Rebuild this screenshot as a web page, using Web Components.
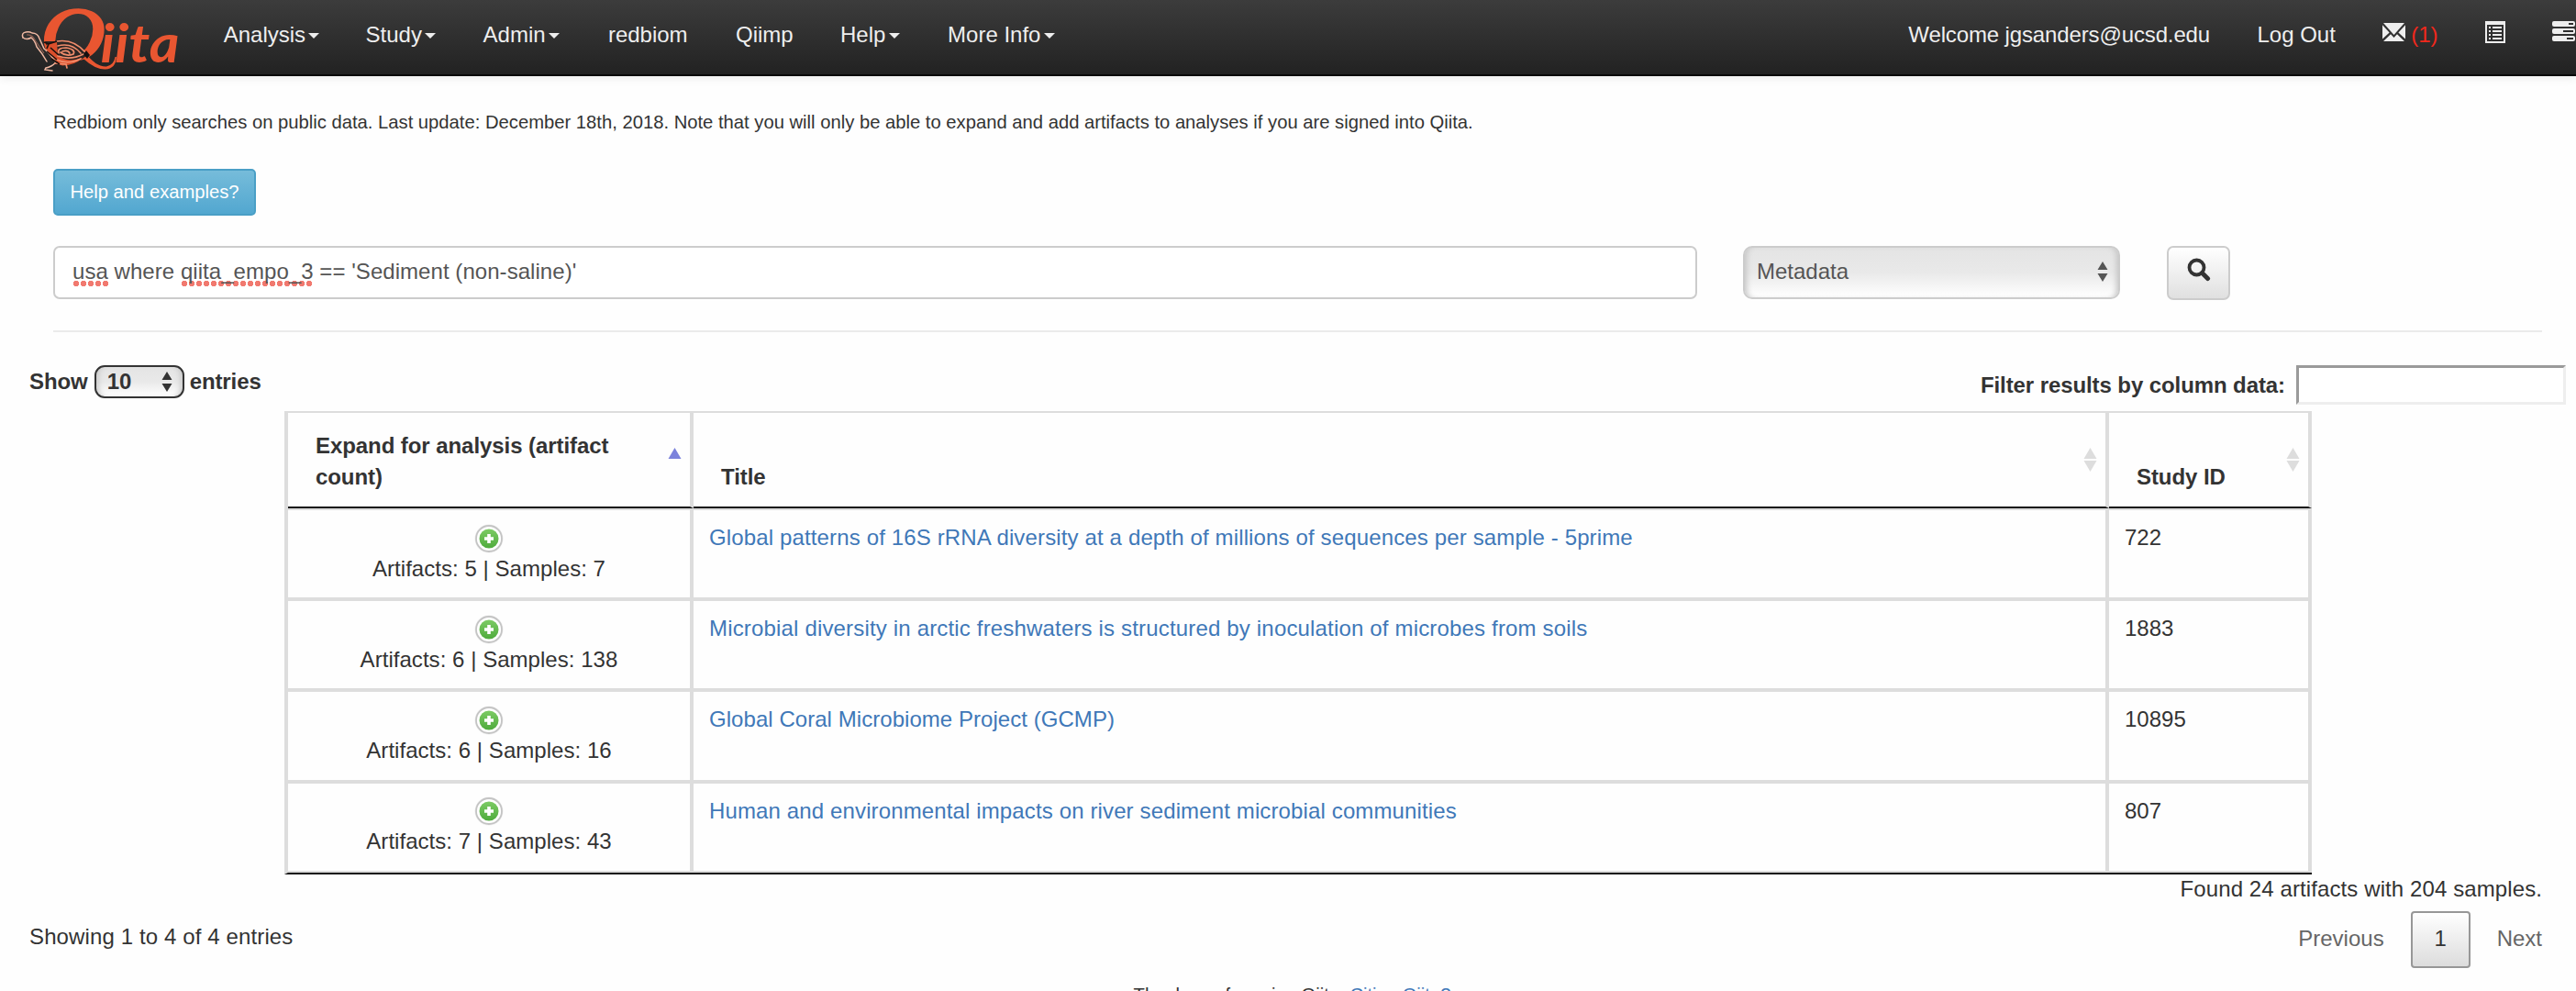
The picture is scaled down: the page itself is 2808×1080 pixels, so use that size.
<!DOCTYPE html>
<html lang="en">
<head>
<meta charset="utf-8">
<title>Qiita</title>
<style>
html,body{margin:0;height:1080px;overflow:hidden;background:#fefefe}
body{font:24px/34px "Liberation Sans",Arial,sans-serif;color:#333}
</style>
</head>
<body>
<qiita-page></qiita-page>
<script>
const define=(name,html)=>customElements.define(name,class extends HTMLElement{
  constructor(){super();const t=document.createElement('template');t.innerHTML=html;
    this.attachShadow({mode:'open'}).append(t.content.cloneNode(true));}
});

define('qiita-logo',`<style>:host{display:block;width:186px;height:81px}svg{display:block}text{fill:#e95631}</style>
<svg width="186" height="81" viewBox="14 0 186 81">
<defs><clipPath id="c"><rect x="14" y="0" width="186" height="66"/></clipPath></defs>
<g clip-path="url(#c)"><text x="44" y="65" font-family="Liberation Serif" font-style="italic" font-size="82" textLength="70" lengthAdjust="spacingAndGlyphs" stroke="#e95631" stroke-width="2.4">Q</text></g>
<path d="M93 57Q104 73 116 72.500Q124 71 125.500 62L127 62Q126 75 115 75.500Q104 76 91 64Z" fill="#e95631"/>
<text x="109.500" y="68" font-family="Lato" font-style="italic" font-weight="bold" font-size="57" textLength="86" lengthAdjust="spacingAndGlyphs">iita</text>
<path d="M49 45L62 45Q80 42 93 57L94 61Q84 70 68 71Q56 68 49 45Z" fill="#2c2624"/>
<path d="M49 50Q55 46 62 46L63 60Q72 69 90 63Q82 71 68 71.500Q56 68 49 50Z" fill="#dc4f2c"/>
<g fill="none" stroke="#f0b9a3" stroke-width="1.500" stroke-linecap="round">
<path d="M25 41Q23 36 28 35Q32 34 35 36Q41 36 43 42L48 53Q54 58 61 68Q56 73 50 74L49 76L57 77"/>
<path d="M25 41Q29 44 34 41Q38 44 40 51Q46 58 51 67"/>
</g>
<path d="M29 38Q35 37 39 45L48 58" fill="none" stroke="#8d5e50" stroke-width="1.200"/>
<g fill="none" stroke="#f08d6c" stroke-width="1.700" stroke-linecap="round"><path d="M62 45Q80 42 93 57M63 50Q78 46 88 58M63 61Q77 66 91 59M64 58Q62 52 72 52Q83 54 80 59Q72 62 66 57M68 56Q74 54 76 58M62 65Q74 71 88 64M60 69L72 70L73 74"/></g>
<g fill="none" stroke="#1b100d" stroke-width="1.600"><path d="M48 46L53 48L62 45M53 48L51 53M55 52L64 60M51 56L62 65M56 64L65 70"/></g>
<path d="M91 59L94 55L98 60L95 64Z" fill="#161010"/>
</svg>`);

define('nav-item',`<style>:host{display:flex;align-items:center;height:81px;padding:0 25.7px;color:#eee;white-space:nowrap;gap:3.3px}
i{display:none;border:6px solid transparent;border-top-color:#eee;border-bottom:0;margin-top:-4px}:host([menu]) i{display:block}
span{margin-top:-6px}</style><span><slot></slot></span><i></i>`);

define('mail-icon',`<style>:host{display:block;width:25px;height:20px;margin-top:-5px}svg{display:block}</style>
<svg width="25" height="20" viewBox="0 0 25 20" fill="#eee"><path d="M1 0H24L12.5 13ZM0 2.2L7.6 10.6L0 17.5ZM25 2.2V17.5L17.4 10.6ZM9 12.2L12.5 16L16 12.2L24 20H1Z"/></svg>`);
define('list-icon',`<style>:host{display:block;width:22px;height:24px;margin-top:-5px}svg{display:block}</style>
<svg width="22" height="24" viewBox="0 0 22 24"><path fill="#eee" fill-rule="evenodd" d="M0 0H22V24H0ZM2 4V22H20V4Z"/><path fill="#eee" d="M4 6h2v2H4zM8 6h10v2H8zM4 10h2v2H4zM8 10h10v2H8zM4 14h2v2H4zM8 14h10v2H8zM4 18h2v2H4zM8 18h10v2H8z"/></svg>`);
define('tasks-icon',`<style>:host{display:block;width:25px;height:22px;margin-top:-7px}svg{display:block}</style>
<svg width="25" height="22" viewBox="0 0 25 22"><g fill="#eee"><rect width="25" height="6" rx="2"/><rect y="8" width="25" height="6" rx="2"/><rect y="16" width="25" height="6" rx="2"/></g><path fill="#2d2d2d" d="M18 2h5v2h-5zM12 10h11v2H12zM16 18h7v2h-7z"/></svg>`);

define('top-bar',`<style>:host{display:flex;box-sizing:border-box;height:83px;border-bottom:2px solid #080808;background:linear-gradient(#3c3c3c,#222);box-shadow:0 2px 10px rgba(0,0,0,.08);padding-left:14px}
nav{display:flex}.r{margin-left:auto;margin-right:-25px}.m{display:flex;align-items:center;gap:6px}.m b{font-weight:400;color:#f0281c}
.l{margin-left:18px}.l nav-item:nth-child(2){margin-left:-1.2px}.l nav-item:nth-child(4){margin-left:1.6px}.l nav-item:nth-child(5),.l nav-item:nth-child(7){margin-left:1px}.w{letter-spacing:-.13px}</style>
<qiita-logo></qiita-logo>
<nav class="l"><nav-item menu>Analysis</nav-item><nav-item menu>Study</nav-item><nav-item menu>Admin</nav-item><nav-item>redbiom</nav-item><nav-item>Qiimp</nav-item><nav-item menu>Help</nav-item><nav-item menu>More Info</nav-item></nav>
<nav class="r"><nav-item class="w">Welcome jgsanders@ucsd.edu</nav-item><nav-item>Log Out</nav-item><nav-item><div class="m"><mail-icon></mail-icon><b>(1)</b></div></nav-item><nav-item><list-icon></list-icon></nav-item><nav-item><tasks-icon></tasks-icon></nav-item></nav>`);

define('select-box',`<style>:host{display:flex;box-sizing:border-box;align-items:center;justify-content:space-between;background:linear-gradient(#e4e4e4,#e9e9e9 50%,#fff);border:2px solid #ccc;border-radius:10px;box-shadow:inset 6px 0 6px -4px #c4c4c4,inset -6px 0 6px -4px #c4c4c4}
svg{display:block}</style><span><slot></slot></span><svg width="12" height="22" viewBox="0 0 12 22" fill="currentColor"><path d="M6 0L11.5 9H.5ZM6 22L11.5 13H.5Z"/></svg>`);

define('search-row',`<style>:host{display:flex;height:59px;align-items:flex-start}
.q{box-sizing:border-box;width:1792px;height:58px;border:2px solid #ccc;border-radius:7px;background:#fff;padding:9px 19px;color:#555;white-space:pre;letter-spacing:.05px}
.q u{text-decoration:none;display:inline-block;height:34px;background:radial-gradient(circle at 4px 3px,#f1796f 2.9px,transparent 3.4px) 0 27px/8px 6px repeat-x}
select-box{width:411px;height:58px;margin-left:50px;padding:0 11px 2px 13px;color:#555}
button{box-sizing:border-box;width:69px;height:59px;margin:0 0 0 51px;border:2px solid #ccc;border-radius:7px;background:linear-gradient(#fff,#e0e0e0);display:flex;justify-content:center;padding:11px 0 0}</style>
<div class="q"><u>usa</u> where <u>qiita_empo_3</u> == 'Sediment (non-saline)'</div><select-box>Metadata</select-box>
<button><svg width="26" height="26" viewBox="0 0 26 26" fill="none" stroke="#333"><circle cx="10.5" cy="10.5" r="8" stroke-width="3.8"/><path d="M16.5 16.5L22.5 22.5" stroke-width="5" stroke-linecap="round"/></svg></button>`);

define('table-tools',`<style>:host{display:flex;justify-content:space-between;font-weight:700;height:50px;letter-spacing:-.09px}
.s{display:flex;height:36px;align-items:center}select-box{width:98px;height:36px;margin:0 6px 0 7px;border-color:#333;border-radius:11px;padding:0 11px 0 12px}
.f{display:flex;gap:12px;height:43px;align-items:center}.f i{box-sizing:border-box;width:294px;height:43px;border:3px solid #eee;border-color:#9a9a9a #eee #eee #9a9a9a;background:#fff}</style>
<div class="s">Show<select-box>10</select-box>entries</div><div class="f"><span>Filter results by column data:</span><i></i></div>`);

define('sort-mark',`<style>:host{display:block;width:15px;height:26px}svg{display:block}.n{fill:#ddd}:host([asc]) .u{fill:#7b82dc}:host([asc]) .d{display:none}</style>
<svg width="15" height="26" viewBox="0 0 15 26"><path class="n u" d="M7.5 0L14.5 12H.5Z"/><path class="n d" d="M.5 14H14.5L7.5 26Z"/></svg>`);
define('plus-icon',`<style>:host{display:block;width:34px;height:34px}svg{display:block}</style>
<svg width="34" height="34" viewBox="0 0 34 34"><defs><linearGradient id="g" x2="0" y2="1"><stop stop-color="#7ccb64"/><stop offset="1" stop-color="#4fab3d"/></linearGradient></defs><circle cx="17" cy="17" r="15.5" fill="#eee"/><circle cx="17" cy="17" r="14" fill="#fff" stroke="#c4c4c4" stroke-width="1.8"/><circle cx="17" cy="17" r="10.5" fill="url(#g)"/><path d="M12 17H22M17 12V22" stroke="#fff" stroke-width="3.6"/></svg>`);

define('head-cell',`<style>:host{display:flex;align-items:flex-end;justify-content:space-between;box-sizing:border-box;height:106px;padding:0 9px 15px 30px;border-right:4px solid #ddd;border-bottom:2px solid #111;border-top:2px solid #ddd;font-weight:700;letter-spacing:-.07px}</style><slot></slot><slot name="mark"></slot>`);
define('study-row',`<style>:host{display:grid;grid-template-columns:442px 1543px 221px;height:99px;box-sizing:border-box;border-bottom:4px solid #ddd}
:host([last]){border-bottom:2px solid #ddd;height:97px}
div{border-right:4px solid #ddd;box-sizing:border-box;padding:13px 16px 0 17px}.a{padding:14px 0 0;display:flex;flex-direction:column;align-items:center}.a plus-icon{margin-bottom:-1px}:host([last]) .a{padding-top:13px}.a slot{letter-spacing:.04px}.t{color:#4078b8;letter-spacing:var(--ls,.14px)}</style>
<div class="a"><plus-icon></plus-icon><slot name="count"></slot></div><div class="t"><slot></slot></div><div><slot name="id"></slot></div>`);

define('study-table',`<style>:host{display:block;width:2210px;margin-left:310px;box-sizing:border-box;border-left:4px solid #ddd;border-bottom:2px solid #111}
.h{display:grid;grid-template-columns:442px 1543px 221px}.g{height:2px;background:#ddd}sort-mark{margin-bottom:23px}</style>
<div class="h"><head-cell><span>Expand for analysis (artifact<br>count)</span><sort-mark asc slot="mark"></sort-mark></head-cell><head-cell>Title<sort-mark slot="mark"></sort-mark></head-cell><head-cell>Study ID<sort-mark slot="mark"></sort-mark></head-cell></div><div class="g"></div>
<study-row><span slot="count">Artifacts: 5 | Samples: 7</span>Global patterns of 16S rRNA diversity at a depth of millions of sequences per sample - 5prime<span slot="id">722</span></study-row>
<study-row style="--ls:.17px"><span slot="count">Artifacts: 6 | Samples: 138</span>Microbial diversity in arctic freshwaters is structured by inoculation of microbes from soils<span slot="id">1883</span></study-row>
<study-row style="height:100px;--ls:.05px"><span slot="count">Artifacts: 6 | Samples: 16</span>Global Coral Microbiome Project (GCMP)<span slot="id">10895</span></study-row>
<study-row last style="--ls:.13px"><span slot="count">Artifacts: 7 | Samples: 43</span>Human and environmental impacts on river sediment microbial communities<span slot="id">807</span></study-row>`);

define('table-footer',`<style>:host{display:block;padding:0 37px 0 32px}
.f{text-align:right;height:40px;line-height:31px;letter-spacing:.1px}.p{display:flex;justify-content:space-between;height:62px;align-items:center}.p>span{margin-top:-6px;letter-spacing:.12px}
.n{display:flex;align-items:center;color:#666;height:62px;line-height:32px}.n b{box-sizing:border-box;width:65px;height:62px;border:2px solid #979797;border-radius:4px;background:linear-gradient(#fff,#dcdcdc);font-weight:400;color:#333;text-align:center;line-height:56px;margin:0 29px}.n span{margin-top:-2px}</style>
<div class="f">Found 24 artifacts with 204 samples.</div><div class="p"><span>Showing 1 to 4 of 4 entries</span><div class="n"><span>Previous</span><b>1</b><span>Next</span></div></div>`);

define('qiita-page',`<style>:host{display:block;width:2808px;height:1080px;overflow:hidden}
.i{padding:33px 37px 0 58px}p{margin:0;font-size:20.23px;line-height:34px}
.help{display:inline-flex;box-sizing:border-box;width:221px;height:51px;margin-top:34px;align-items:center;justify-content:center;border:2px solid #4a9fc6;border-radius:5px;background:linear-gradient(#76bcda,#52a7d0);color:#fff;font:20.22px "Liberation Sans",Arial,sans-serif;padding:0}
search-row{margin-top:33px}hr{border:0;height:2px;background:#ebebeb;margin:33px 0 36px}
table-tools{padding:0 11px 0 32px}.thanks{text-align:center;margin-top:12px;white-space:pre;font-size:20.22px;padding-left:9px}.thanks a{color:#4078b8}</style>
<top-bar></top-bar>
<div class="i"><p>Redbiom only searches on public data. Last update: December 18th, 2018. Note that you will only be able to expand and add artifacts to analyses if you are signed into Qiita.</p>
<button class="help">Help and examples?</button><search-row></search-row><hr></div>
<table-tools></table-tools><study-table></study-table><table-footer></table-footer>
<div class="thanks">Thank you for using Qiita. <a>Citing Qiita?</a></div>`);
</script>
</body>
</html>
